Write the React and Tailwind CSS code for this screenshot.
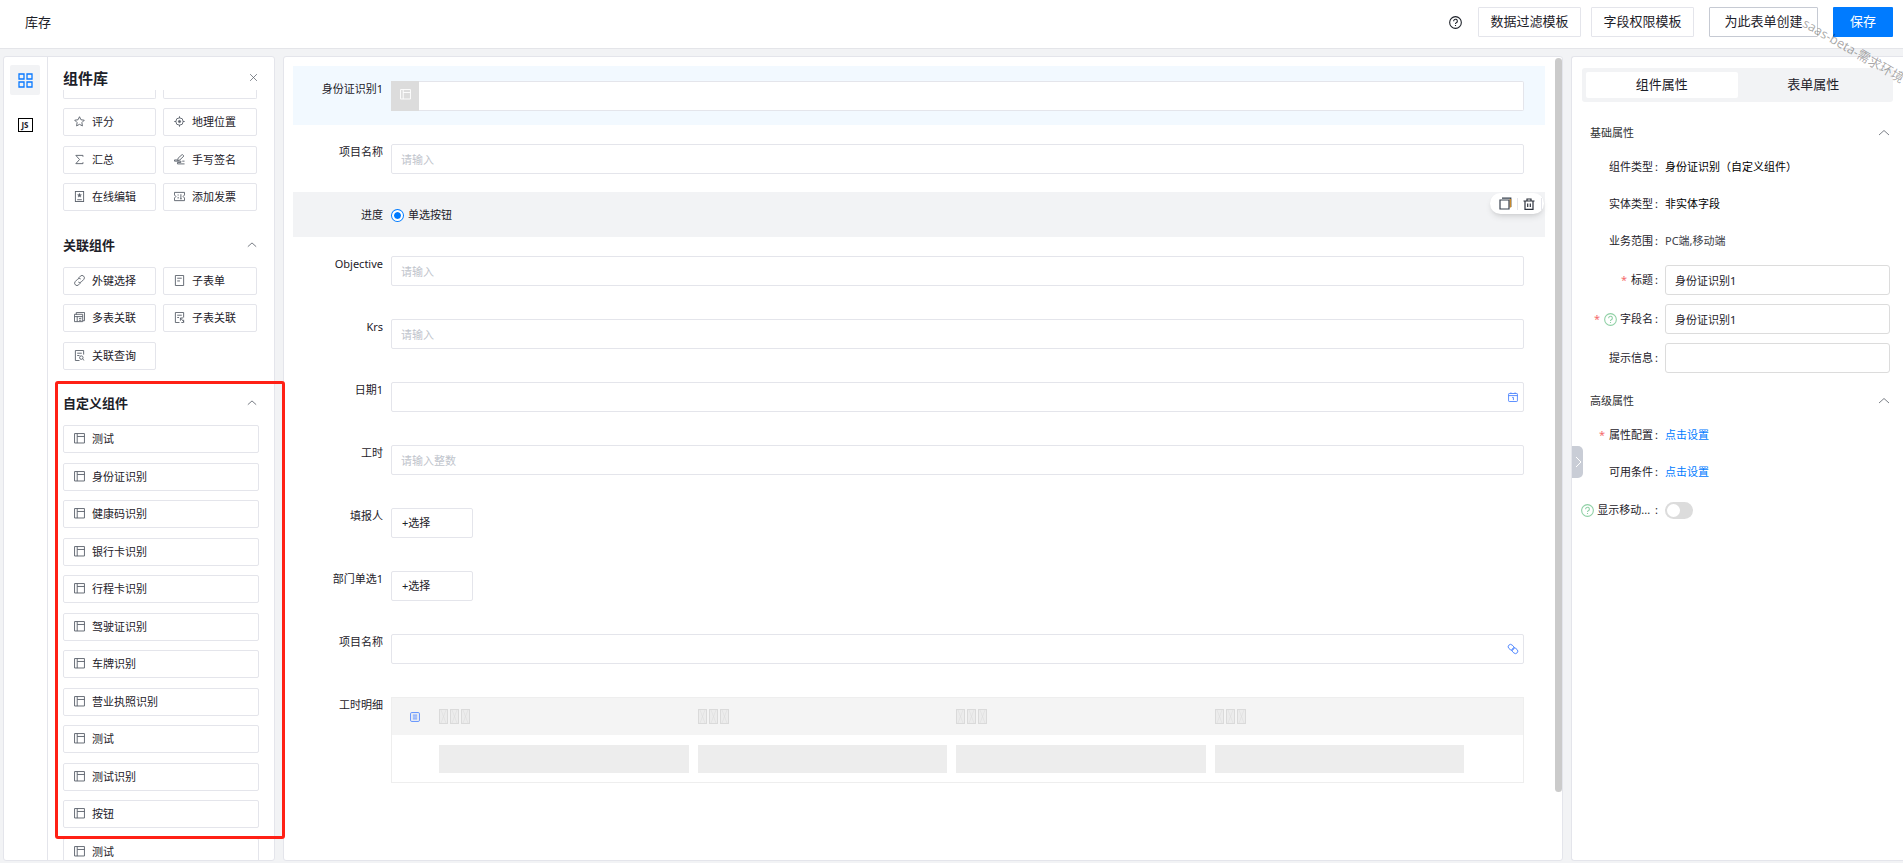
import React, { useState } from "react";

// 图标路径 (12 x 12)
const ICONS = {
    star: <path d="M6 .8l1.6 3.3 3.6.5-2.6 2.6.6 3.6L6 9.1l-3.2 1.7.6-3.6L.8 4.6l3.6-.5z" />,
    location: <><circle cx="6" cy="6" r="4" /><circle cx="6" cy="6" r="1.2" fill="currentColor" /><path d="M6 .3v2M6 9.7v2M.3 6h2M9.7 6h2" /></>,
    sum: <path d="M9.800 3V1.500H2L6 6l-4 4.500h7.800V9" />,
    sign: <path d="M3.800 7.200l.7-2.700L9 .5l1.800 1.700L6.300 6.500zM3.500 6.500H.5v1.300h7V9.200H3.800v1.600h7.700M9 7.800h2.500" />,
    editor: <><rect x="1.5" y=".5" width="9" height="11" /><path d="M6 2.300l.7 1.500 1.600.2-1.200 1.100.3 1.600L6 5.900l-1.400.8.3-1.600L3.700 4l1.600-.2z" fill="currentColor" strokeWidth=".3" /><path d="M3.500 9.500h5" /></>,
    invoice: <path d="M.5 1.500h11v2.800L10 6l1.500 1.700v2.800h-11V7.700L2 6 .5 4.300zM4.500 3.800v1.200M4.500 6.500v1.700M7.500 3.500v5M6.500 8.500h2" />,
    link: <path d="M5 3.200l1.900-1.900a2.500 2.500 0 013.700 3.600L8 7.500a2.400 2.400 0 01-3.300.2M7 8.800l-1.900 1.900a2.500 2.500 0 01-3.700-3.600L4 4.500a2.400 2.400 0 013.300-.2" />,
    form: <path d="M1.500.5h9v11h-9zM3.500 3.500h5M3.500 6.500h3" />,
    multi: <path d="M2.500 3V.5h9v9H9.500M.5 2.500h9v8h-9zM.5 5h9M3.500 5v5.500M5.500 7h2.500M5.500 9h2.500" />,
    subLink: <path d="M10.500 6V.5h-9v11H6M3.500 3.500h5M3.500 6h2M7 6.500l4 4.500M7 6.500v3M7 6.500h3M10.500 8.500v3H8" />,
    query: <><path d="M10.500 5V.5h-9v11H6M3.500 3.500h5M3.500 6h2.500" /><circle cx="8" cy="8.300" r="1.900" /><path d="M9.400 9.700l1.800 1.800" /></>,
    custom: <path d="M.6.6h10.800v10.300H.6zM3.500.5v10.500M3.500 3.800h8" />,
    calendar: <path d="M1.500 1.800h9q.8 0 .8.8v8q0 .8-.8.8h-9q-.8 0-.8-.8v-8q0-.8.8-.8zM.7 4.300h10.600M3.500.5v1.300M8.500.5v1.300M5 6.500h1.500v3.200" />,
    chain: <g transform="rotate(42 6 6)"><rect x="-.8" y="3.200" width="7.600" height="5.600" rx="2.800" /><rect x="5.200" y="3.200" width="7.600" height="5.600" rx="2.800" /></g>,
    list: <><rect x=".7" y=".7" width="10.600" height="10.600" rx="1.300" /><path d="M3.300 3.700h5.400M3.300 6h5.400M3.300 8.300h5.400" /></>,
    up: <path d="M1 8L6 3.500 11 8" />,
    right: <path d="M4 1L9 6 4 11" />,
    close: <path d="M1.500 1.500l9 9M10.500 1.500l-9 9" />,
    help: <><circle cx="6" cy="6" r="5.400" /><path d="M4.300 4.800a1.700 1.700 0 113 1c-.7.600-1.300.8-1.300 1.600M6 8.300v.9" /></>,
}

const Icon = function ({ name, className }) {
    return (
        <svg className={className} viewBox="0 0 12 12" fill="none" stroke="currentColor" strokeWidth="1" aria-hidden="true">
            {ICONS[name]}
        </svg>
    )
}

const baseComponents = [
    { name: '评分', icon: 'star' },
    { name: '地理位置', icon: 'location' },
    { name: '汇总', icon: 'sum' },
    { name: '手写签名', icon: 'sign' },
    { name: '在线编辑', icon: 'editor' },
    { name: '添加发票', icon: 'invoice' },
]

const linkComponents = [
    { name: '外键选择', icon: 'link' },
    { name: '子表单', icon: 'form' },
    { name: '多表关联', icon: 'multi' },
    { name: '子表关联', icon: 'subLink' },
    { name: '关联查询', icon: 'query' },
]

const customComponents = [
    '测试', '身份证识别', '健康码识别', '银行卡识别', '行程卡识别', '驾驶证识别',
    '车牌识别', '营业执照识别', '测试', '测试识别', '按钮', '测试',
]

const ComponentButton = function ({ name, icon }) {
    return (
        <button className="flex h-7 w-full items-center gap-[7px] rounded-[2px] border border-[#e4e5eb] bg-white pl-[10px] text-left">
            <Icon name={icon} className="mb-[2px] size-[11px] text-[#5b616b]" />
            <span>{name}</span>
        </button>
    )
}

const GroupTitle = function ({ title }) {
    return (
        <div className="flex h-5 items-center justify-between">
            <h3 className="text-[13px] font-bold">{title}</h3>
            <button aria-label={title}><Icon name="up" className="mb-[2px] size-[10px] text-[#5b616b]" /></button>
        </div>
    )
}

const Sidebar = function () {
    return (
        <aside className="relative flex w-[272px] shrink-0 rounded-[3px] border border-[#e4e5eb] bg-white">
            <nav className="flex w-11 shrink-0 flex-col items-center gap-[7px] border-r border-[#e4e5eb] pt-2 pr-px">
                <button className="flex size-[30px] items-center justify-center rounded-[2px] bg-[#f2f3f5] text-[#0a7aff]" aria-label="组件库">
                    <svg className="size-[15px]" viewBox="0 0 15 15" fill="none" stroke="currentColor" strokeWidth="1.300">
                        <path d="M1 1h5v5H1zM9 1h5v5H9zM1 9h5v5H1zM9 9h5v5H9z" />
                    </svg>
                </button>
                <button className="flex size-[30px] items-center justify-center pt-[15px]" aria-label="JS">
                    <span className="flex h-[14px] w-[15px] shrink-0 items-center justify-center border border-black text-[8px] leading-[12px] font-bold">JS</span>
                </button>
            </nav>
            <div className="flex min-w-0 flex-1 flex-col pl-[15px]">
                <div className="flex h-[33px] items-center justify-between pt-[10px] pr-4">
                    <h2 className="text-[15px] font-bold">组件库</h2>
                    <button aria-label="关闭"><Icon name="close" className="mb-[2px] size-[9px] text-[#5b616b]" /></button>
                </div>
                <div className="min-h-0 flex-1 overflow-hidden">
                    <div className="w-[194px]">
                        {/* 滚动后露出的上一行 */}
                        <div className="mb-[9px] grid grid-cols-[93px_94px] gap-[7px]">
                            <div className="h-[9px] rounded-b-[2px] border border-t-0 border-[#e4e5eb]"></div>
                            <div className="h-[9px] rounded-b-[2px] border border-t-0 border-[#e4e5eb]"></div>
                        </div>
                        <div className="mb-[15px] grid auto-rows-[38px_37px] grid-cols-[93px_94px] gap-x-[7px]">
                            {baseComponents.map((element, i) => <ComponentButton key={i} {...element} />)}
                        </div>
                        <GroupTitle title="关联组件" />
                        <div className="mt-[11px] mb-[15px] grid auto-rows-[37px_38px] grid-cols-[93px_94px] gap-x-[7px]">
                            {linkComponents.map((element, i) => <ComponentButton key={i} {...element} />)}
                        </div>
                        <GroupTitle title="自定义组件" />
                    </div>
                    <div className="mt-[11px] grid w-[196px] auto-rows-[38px_37px]">
                        {customComponents.map((name, i) => <ComponentButton key={i} name={name} icon="custom" />)}
                    </div>
                </div>
            </div>
            {/* 红色标注框 */}
            <div className="pointer-events-none absolute top-[324px] left-[51px] z-10 h-[458px] w-[230px] rounded-[3px] border-[3px] border-[#ff2015]"></div>
        </aside>
    )
}

const FormItem = function ({ label, id, className, children }) {
    return (
        <div className={"relative flex gap-2 pt-[15px] pr-[21px] pb-[14px] " + (className || '')}>
            <label htmlFor={id} className="w-[90px] shrink-0 text-right leading-4">{label}</label>
            <div className="min-w-0 flex-1">{children}</div>
        </div>
    )
}

const TextField = function ({ id, placeholder, icon }) {
    return (
        <div className="relative">
            <input id={id} type="text" placeholder={placeholder}
                className="block h-[30px] w-full rounded-[2px] border border-[#e4e5eb] bg-white px-[9px] placeholder:text-[#c0c4cc]" />
            {icon && <Icon name={icon} className="absolute top-[10px] right-[6px] size-[10px] overflow-visible text-[#3f7bff]" />}
        </div>
    )
}

const PickButton = function ({ id }) {
    return (
        <button id={id} className="block h-[30px] w-[82px] rounded-[2px] border border-[#e4e5eb] bg-white pl-[10px] text-left">+选择</button>
    )
}

// 表头占位符
const HeadPlaceholder = function () {
    return (
        <svg className="block h-[15px] w-8" viewBox="0 0 32 15" fill="#ececec" stroke="#dadada">
            {[0, 11, 22].map((x) => (
                <g key={x}>
                    <rect x={x + 0.5} y=".5" width="8" height="14" />
                    <path d={`M${x + 2} 1l5 13M${x + 7} 1l-5 13`} strokeWidth=".5" />
                </g>
            ))}
        </svg>
    )
}

const DetailTable = function () {
    const columns = [0, 1, 2, 3]
    return (
        <div className="border border-[#eee]">
            <table className="w-full table-fixed">
                <thead>
                    <tr className="h-[37px] bg-[#f4f4f4]">
                        <th className="w-[47px]"><Icon name="list" className="ml-[18px] size-[10px] text-[#3f7bff]" /></th>
                        {columns.map((i) => <th key={i}><HeadPlaceholder /></th>)}
                        <th className="w-[50px]"></th>
                    </tr>
                </thead>
                <tbody>
                    <tr className="h-[47px]">
                        <td></td>
                        {columns.map((i) => <td key={i} className="pr-[9px]"><div className="h-7 bg-[#ededed]"></div></td>)}
                        <td></td>
                    </tr>
                </tbody>
            </table>
        </div>
    )
}

const FormCanvas = function () {
    return (
        <main className="relative min-w-0 flex-1 overflow-hidden rounded-[3px] border border-[#e4e5eb] bg-white">
            <div className="mt-[9px] mr-[17px] ml-[9px] flex flex-col gap-1">
                <FormItem label="身份证识别1" id="idcard" className="bg-[#f2f9ff]">
                    <div className="flex">
                        <span className="flex h-[30px] w-7 items-center justify-center bg-[#dcdcdc] pb-1 text-white">
                            <Icon name="custom" className="size-[11px]" />
                        </span>
                        <input id="idcard" type="text"
                            className="h-[30px] min-w-0 flex-1 rounded-r-[2px] border border-l-0 border-[#e4e5eb] bg-white px-[9px]" />
                    </div>
                </FormItem>
                <FormItem label="项目名称" id="project"><TextField id="project" placeholder="请输入" /></FormItem>
                <FormItem label="进度" id="progress" className="bg-[#f2f3f5]">
                    <div className="flex h-4 items-center gap-1">
                        <input id="progress" type="radio" defaultChecked
                            className="m-px size-[11px] appearance-none rounded-full border-2 border-white bg-[#007bff] bg-clip-padding ring-1 ring-[#007bff]" />
                        <label htmlFor="progress">单选按钮</label>
                    </div>
                    <div className="absolute top-px right-px flex h-[21px] w-[54px] items-center rounded-full bg-white pl-[9px] shadow-md">
                        <button aria-label="复制">
                            <svg className="size-[13px]" viewBox="0 0 13 13" fill="none" stroke="#39424f" strokeWidth="1.200">
                                <path d="M3 1.200h8.800v8.800" stroke="#39424f" />
                                <path d="M11.300 2v8.500" stroke="#c98a2b" strokeWidth="1.600" />
                                <path d="M1 3h9v9H1z" />
                            </svg>
                        </button>
                        <span className="mx-[5px] h-3 w-px bg-[#e4e5eb]"></span>
                        <button aria-label="删除">
                            <svg className="size-[12px]" viewBox="0 0 12 12" fill="none" stroke="#2b303b" strokeWidth="1.200">
                                <path d="M.5 3h11M4 3V1h4v2M2 3v8.300h8V3M4.700 5.500v3.500M7.300 5.500v3.500" />
                            </svg>
                        </button>
                        <span className="ml-[6px] h-3 w-px bg-[#e4e5eb]"></span>
                    </div>
                </FormItem>
                <FormItem label="Objective" id="objective"><TextField id="objective" placeholder="请输入" /></FormItem>
                <FormItem label="Krs" id="krs"><TextField id="krs" placeholder="请输入" /></FormItem>
                <FormItem label="日期1" id="date"><TextField id="date" icon="calendar" /></FormItem>
                <FormItem label="工时" id="hours"><TextField id="hours" placeholder="请输入整数" /></FormItem>
                <FormItem label="填报人" id="reporter"><PickButton id="reporter" /></FormItem>
                <FormItem label="部门单选1" id="dept"><PickButton id="dept" /></FormItem>
                <FormItem label="项目名称" id="projectLink"><TextField id="projectLink" icon="chain" /></FormItem>
                <FormItem label="工时明细"><DetailTable /></FormItem>
            </div>
            {/* 滚动条 */}
            <div className="absolute top-px right-0 h-[734px] w-[7px] rounded-full bg-[#cbcbcb]"></div>
        </main>
    )
}

const PropRow = function ({ label, id, required, help, className, children }) {
    return (
        <div className={"flex items-center gap-[7px] " + (className || 'h-[37px]')}>
            <label htmlFor={id} className="flex w-[86px] shrink-0 items-center justify-end whitespace-pre">
                {required && <span className="mr-1 text-[#f56c6c]">*</span>}
                {help && <Icon name="help" className="mr-[3px] size-[13px] shrink-0 text-[#8fd0a5]" />}
                <span>{label}</span>
                <span className="ml-[2px]">:</span>
            </label>
            <div className="min-w-0 flex-1">{children}</div>
        </div>
    )
}

const PropInput = function ({ id, value, onChange }) {
    return (
        <input id={id} type="text" value={value} onChange={(e) => onChange(e.target.value)}
            className="block h-[30px] w-full rounded-[3px] border border-[#dcdcdc] bg-white px-[9px]" />
    )
}

const PropTitle = function ({ title }) {
    return (
        <div className="flex h-5 items-center justify-between pl-[18px]">
            <h3 className="text-[#303133]">{title}</h3>
            <button aria-label={title}><Icon name="up" className="size-3 text-[#7b7f87]" /></button>
        </div>
    )
}

const PropertyPanel = function () {
    const [title, setTitle] = useState('身份证识别1') // 标题
    const [field, setField] = useState('身份证识别1') // 字段名
    const [tip, setTip] = useState('') // 提示信息

    return (
        <aside className="relative w-[332px] shrink-0 rounded-l-[3px] border border-r-0 border-[#e4e5eb] bg-white pr-[13px]">
            <div className="mt-[11px] mr-[-3px] ml-[10px] flex h-[34px] rounded-[3px] bg-[#f2f3f5] p-1 text-[13px]">
                <button className="flex-1 rounded-[2px] bg-white">组件属性</button>
                <button className="flex-1">表单属性</button>
            </div>
            <div className="mt-[21px]">
                <PropTitle title="基础属性" />
                <div className="mt-[6px]">
                    <PropRow label="组件类型"><span className="text-black">身份证识别（自定义组件）</span></PropRow>
                    <PropRow label="实体类型"><span className="text-black">非实体字段</span></PropRow>
                    <PropRow label="业务范围"><span className="text-[#3c4048]">PC端,移动端</span></PropRow>
                    <div className="mt-[5px] flex flex-col gap-[9px]">
                        <PropRow label="标题" id="title" required className="h-[30px]"><PropInput id="title" value={title} onChange={setTitle} /></PropRow>
                        <PropRow label="字段名" id="field" required help className="h-[30px]"><PropInput id="field" value={field} onChange={setField} /></PropRow>
                        <PropRow label="提示信息" id="tip" className="h-[30px]"><PropInput id="tip" value={tip} onChange={setTip} /></PropRow>
                    </div>
                </div>
            </div>
            <div className="mt-[18px]">
                <PropTitle title="高级属性" />
                <div className="mt-[6px]">
                    <PropRow label="属性配置" required><a href="#config" className="text-[#007bff]">点击设置</a></PropRow>
                    <PropRow label="可用条件"><a href="#condition" className="text-[#007bff]">点击设置</a></PropRow>
                    <PropRow label="显示移动... " id="mobile" help className="h-[38px]">
                        <input id="mobile" type="checkbox" role="switch"
                            className="block h-[17px] w-7 appearance-none rounded-full bg-[#dcdcdc] p-[2px] before:block before:size-[13px] before:rounded-full before:bg-white checked:bg-[#007bff] checked:before:ml-[11px]" />
                    </PropRow>
                </div>
            </div>
            {/* 收起按钮 */}
            <button className="absolute top-[389px] left-0 flex h-8 w-[11px] items-center justify-center rounded-r-[5px] bg-[#c9cdd6] text-white" aria-label="收起">
                <Icon name="right" className="size-3 shrink-0" />
            </button>
        </aside>
    )
}

const Header = function () {
    return (
        <header className="flex h-[49px] shrink-0 items-start border-b border-[#e4e5e9] bg-white pt-[7px] pr-[10px] pl-[25px] text-[13px]">
            <h1 className="mr-auto leading-[30px]">库存</h1>
            <button className="mr-4 flex h-[30px] items-center" aria-label="帮助">
                <Icon name="help" className="size-[13px]" />
            </button>
            <button className="mr-[10px] h-[30px] w-[103px] rounded-[1px] border border-[#e4e5eb]">数据过滤模板</button>
            <button className="mr-[15px] h-[30px] w-[103px] rounded-[1px] border border-[#e4e5eb]">字段权限模板</button>
            <button className="mr-[15px] h-[30px] w-[109px] rounded-[1px] border border-[#c6cad3]">为此表单创建</button>
            <button className="h-[30px] w-[60px] rounded-[1px] bg-[#007bff] text-white">保存</button>
        </header>
    )
}

const App = function () {
    return (
        <div className="relative flex h-screen flex-col overflow-hidden bg-[#f2f3f5] font-['Noto_Sans','Noto_Sans_CJK_SC',sans-serif] text-[11px] text-[#1d2129]">
            <Header />
            <div className="flex min-h-0 flex-1 gap-2 pt-[7px] pb-[2px] pl-[3px]">
                <Sidebar />
                <FormCanvas />
                <PropertyPanel />
            </div>
            {/* 水印 */}
            <div className="pointer-events-none absolute top-[13px] right-0 h-20 w-[94px]">
                <span className="absolute top-0 left-0 origin-top-left rotate-30 text-[13px] leading-5 whitespace-nowrap text-black/35">saas-beta-需求环境</span>
            </div>
        </div>
    )
}

export default App;
